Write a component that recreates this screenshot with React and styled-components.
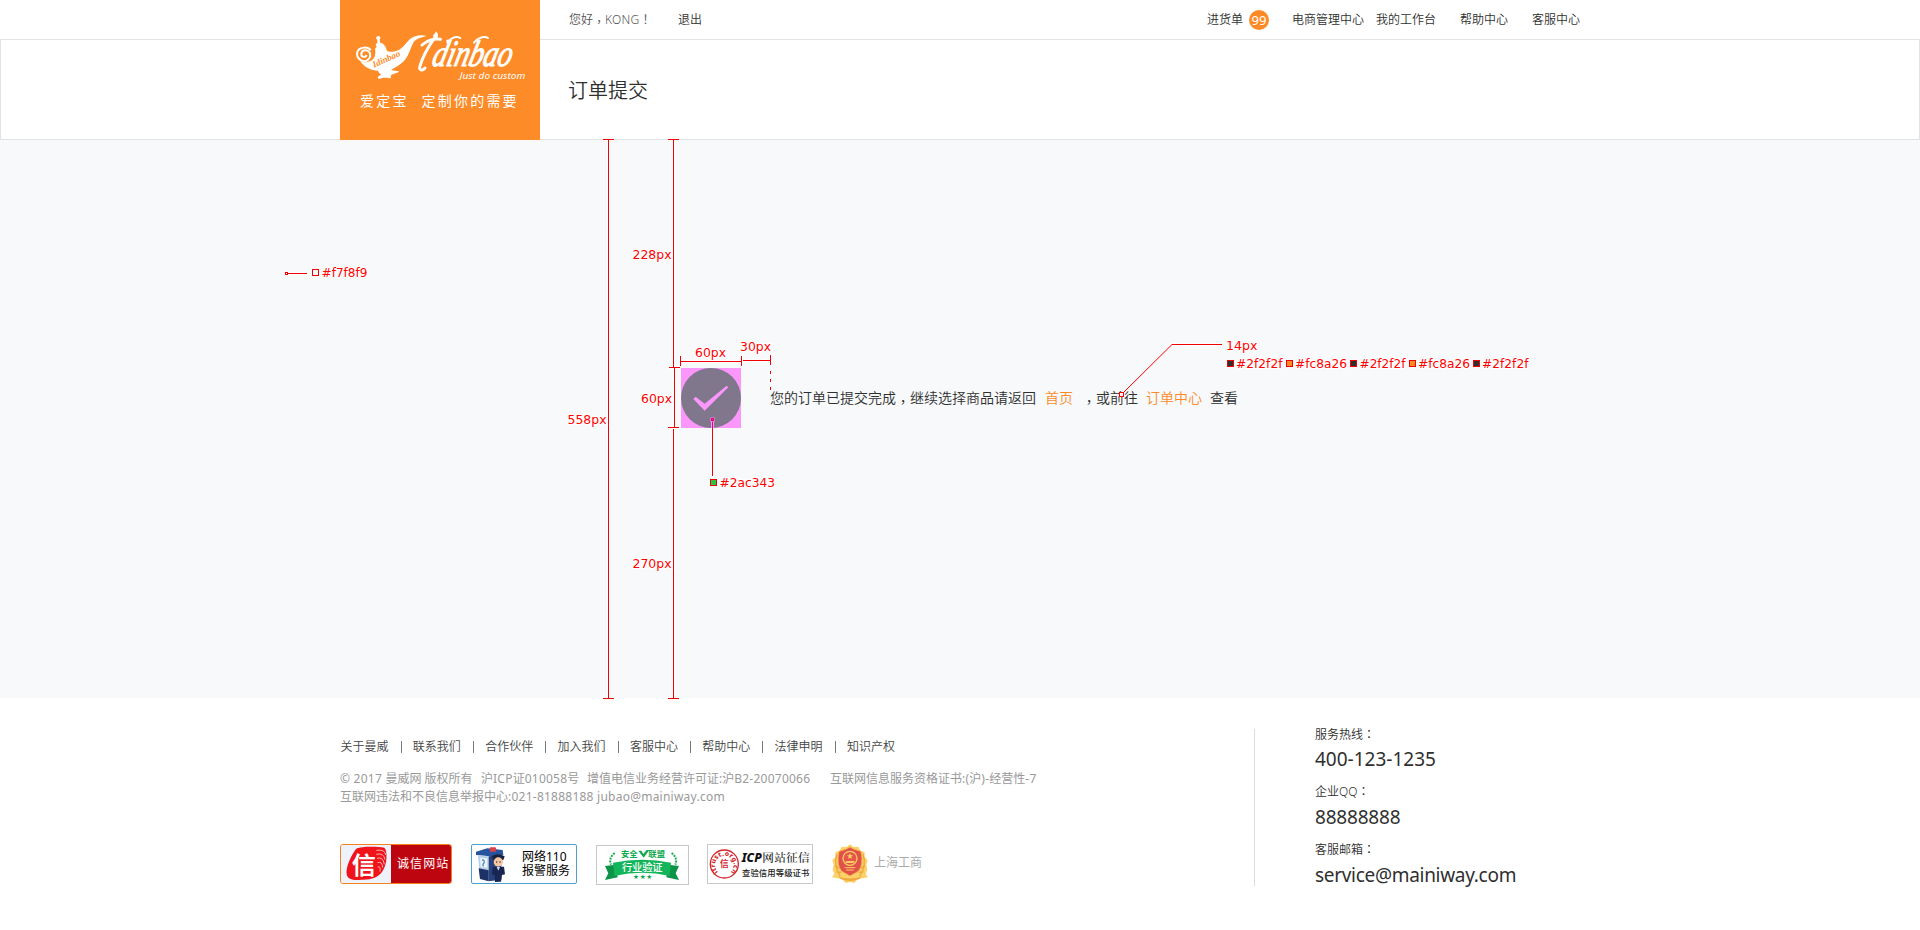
import React from "react";
import styled, { createGlobalStyle } from "styled-components";

const GlobalStyle = createGlobalStyle`
  * { box-sizing: border-box; }
  body {
    margin: 0;
    background: #fff;
    color: #2f2f2f;
    font-family: "Noto Sans", "Noto Sans CJK SC", sans-serif;
    font-size: 12px;
    line-height: 18px;
  }
`;

const Page = styled.div`
  position: relative;
  width: 1920px;
  height: 930px;
  overflow: hidden;
`;

/* Full-width punctuation, centred in its em box; commas sit near the baseline */
const Punct = styled.span`
  font-family: "Noto Sans CJK TC", sans-serif;
  line-height: 0;
  vertical-align: ${(p) => (p.$low ? "-0.25em" : "baseline")};
`;

/* ---------- header ---------- */

const Header = styled.header`
  display: grid;
  grid-template-columns: 340px 200px 1fr;
  grid-template-rows: 39px 101px;
`;

const TopBar = styled.div`
  grid-column: 3;
  grid-row: 1;
  display: flex;
  align-items: center;
  padding: 1px 340px 0 29px;
  font-weight: 350;
`;

const TopText = styled.span`
  color: ${(p) => p.$color || "#2f2f2f"};
  margin-left: ${(p) => p.$gap || 0}px;
  width: ${(p) => p.$w}px;
  white-space: nowrap;
`;

const TopRight = styled.nav`
  display: flex;
  align-items: center;
  margin-left: auto;
`;

const Count = styled.span`
  width: 20px;
  height: 20px;
  margin-left: 6px;
  border-radius: 50%;
  background: #fc8a26;
  color: #fff;
  font-size: 13px;
  font-weight: 400;
  text-align: center;
  line-height: 20px;
`;

const TitleBar = styled.div`
  grid-column: 1 / -1;
  grid-row: 2;
  border: 1px solid #e1e3e4;
  padding: 36px 0 0 567px;
`;

const Title = styled.h1`
  margin: 0;
  font-size: 20px;
  font-weight: 350;
  line-height: 30px;
`;

const Logo = styled.a`
  grid-column: 2;
  grid-row: 1 / 3;
  z-index: 1;
  display: flex;
  flex-direction: column;
  background: #fd8b27;
`;

const Slogan = styled.span`
  display: flex;
  gap: 13px;
  padding-left: 20px;
  color: #fff;
  font-size: 14px;
  line-height: 20px;
  letter-spacing: 2.2px;
  white-space: nowrap;
`;

/* ---------- main ---------- */

const Main = styled.main`
  height: 558px;
  background: #f7f9fb;
  padding: 228px 0 0 681px;
`;

const Result = styled.div`
  display: flex;
  align-items: center;
  gap: 29px;
  height: 60px;
`;

const Message = styled.p`
  display: flex;
  margin: 0;
  padding-bottom: 1px;
  font-size: 14px;
  font-weight: 350;
  line-height: 20px;
  white-space: pre;
`;

const Link = styled.a`
  color: #fc8a26;
  margin: 0 ${(p) => p.$right}px 0 ${(p) => p.$left}px;
`;

/* ---------- footer ---------- */

const Footer = styled.footer`
  display: flex;
  padding: 31px 0 0 340px;
`;

const FooterInfo = styled.div`
  width: 914px;
  padding-top: 9px;
`;

const FooterLinks = styled.nav`
  display: flex;
  align-items: center;
  padding-left: 0.5px;
  color: #444;
  font-weight: 350;
`;

const FooterLink = styled.a`
  width: 49px;
  white-space: nowrap;
`;

const Divider = styled.i`
  width: 1px;
  height: 12px;
  margin: 0 11.25px 0 11.1px;
  background: #777;
`;

const Copyright = styled.div`
  margin-top: 14px;
  color: #999;
  white-space: nowrap;
`;

const Line = styled.div`
  display: flex;
  height: 18px;
`;

const Part = styled.span`
  width: ${(p) => p.$w}px;
`;

const Latin = styled.span`
  letter-spacing: 0.24px;
`;

const Badges = styled.div`
  display: flex;
  align-items: center;
  margin-top: 37px;
`;

const Badge = styled.div`
  display: flex;
  align-items: center;
  width: ${(p) => p.$w}px;
  height: 40px;
  margin: ${(p) => p.$drop || 0}px ${(p) => p.$gap}px 0 0;
  border: 1px solid ${(p) => p.$line};
  border-radius: ${(p) => p.$radius || 0}px;
  overflow: hidden;
  background: #fff;
`;

const RedLabel = styled.span`
  flex: 1;
  align-self: stretch;
  background: #bd0510;
  color: #fff;
  letter-spacing: 1.1px;
  line-height: 38px;
  padding-left: 6px;
  white-space: nowrap;
`;

const PoliceLabel = styled.span`
  margin-left: 14px;
  color: #000;
  line-height: 14px;
  white-space: nowrap;
`;

const Bureau = styled.span`
  margin: 0 0 3px 5px;
  color: #aaa;
`;

const Contact = styled.dl`
  height: 157px;
  margin: 0;
  border-left: 1px solid #ddd;
  padding-left: 60px;
`;

const ContactLabel = styled.dt`
  height: ${(p) => p.$h}px;
  font-weight: 350;
  line-height: 12px;
`;

const ContactValue = styled.dd`
  margin: 0 0 ${(p) => p.$after || 0}px;
  height: 28px;
  font-size: 19px;
  line-height: 28px;
  letter-spacing: ${(p) => p.$spacing}px;
`;

/* ---------- measurement marks ---------- */

const Marks = styled.svg`
  position: absolute;
  left: 0;
  top: 0;
  pointer-events: none;

  text {
    font-family: "DejaVu Sans", sans-serif;
    font-size: 12.2px;
    fill: #f00;
    stroke: #fff;
    stroke-width: 2px;
    paint-order: stroke;
  }
`;

const LAMP = {
  body: "M88 178C98 192 110 186 124 182C134 176 136 166 136 154C134 146 136 142 141 140C134 136 138 131 142 129L142 119C136 116 138 109 145 108C152 109 153 116 149 119L150 128C158 128 160 132 164 137C168 141 169 147 171 153C178 157 196 155 208 149C222 140 229 127 240 117C252 107 272 103 290 108C272 113 259 116 251 126C238 151 236 171 218 187C206 197 196 203 184 209C190 213 201 211 207 214C205 220 190 220 182 227C184 231 183 235 178 235C166 232 156 234 147 237C140 233 145 228 152 226C155 221 145 220 145 213C122 211 99 202 88 178Z",
  curl: "M110 165C106 174 94 172 94 162C94 150 112 146 119 158C126 174 108 190 94 181C76 172 76 146 100 143C110 142 119 146 122 151",
};

function LogoArt() {
  return (
    <svg width="200" height="91" viewBox="30 0 600 273" overflow="visible">
      <path d={LAMP.body} fill="#fff" />
      <path d={LAMP.curl} fill="none" stroke="#fff" strokeWidth="6" />
      <text x="132" y="203" transform="rotate(-24 132 203)" textLength="88" lengthAdjust="spacingAndGlyphs"
        fontFamily="Liberation Serif, serif" fontStyle="italic" fontWeight="700" fontSize="27" fill="#fd8b27">Idinbao</text>
      <path d="M317 94C327 101 325 108 321 116C314 115 307 111 310 105C313 102 317 99 317 94Z" fill="#fff" />
      <path d="M276 135C293 119 318 115 331 118M312 116C293 143 276 178 270 198C266 210 276 215 285 204" fill="none" stroke="#fff" strokeWidth="9" strokeLinecap="round" />
      <text transform="translate(302 198) skewX(-14)" textLength="238" lengthAdjust="spacingAndGlyphs"
        fontFamily="Liberation Serif, serif" fontStyle="italic" fontSize="112" fill="#fff" stroke="#fff" strokeWidth="3">dinbao</text>
      <path d="M352 128C362 114 378 106 391 114M432 128C442 114 462 106 474 114" fill="none" stroke="#fff" strokeWidth="6" strokeLinecap="round" />
      <text x="389" y="237" textLength="197" lengthAdjust="spacingAndGlyphs" fontFamily="Noto Sans, sans-serif"
        fontStyle="italic" fontSize="28" fontWeight="400" fill="#fff">Just do custom</text>
    </svg>
  );
}

function CheckIcon() {
  return (
    <svg width="60" height="60" viewBox="0 0 180 180">
      <rect width="180" height="180" fill="#fb96fb" />
      <circle cx="90" cy="90" r="90" fill="#80778d" />
      <path d="M37 93L44 86L71 107L137 53L142 58L71 128Z" fill="#fb96fb" />
    </svg>
  );
}

function TrustSeal() {
  return (
    <svg width="50" height="38" viewBox="0 0 150 114">
      <rect width="150" height="114" fill="#eef2fb" />
      <path d="M45 12C60 3 110 5 130 8C140 16 139 58 125 78C112 98 90 105 62 104C40 107 20 105 17 88C14 66 30 32 45 12Z" fill="#f0141a" />
      <path d="M106 16Q132 12 134 30M106 28Q128 22 132 44M108 40Q126 34 130 58M110 53Q124 48 125 68M110 66Q120 62 117 80" fill="none" stroke="#f7b5b8" strokeWidth="3" />
      <text x="32" y="86" fontFamily="Noto Sans CJK SC, sans-serif" fontWeight="700" fontSize="72" fill="#fff">信</text>
    </svg>
  );
}

function PoliceBooth() {
  return (
    <svg width="36" height="38" viewBox="0 0 108 114">
      <path d="M12 20L46 10L92 15L94 30L54 34L12 30Z" fill="#27549c" />
      <path d="M18 31L50 34L50 106L24 100Z" fill="#b8cfe5" />
      <path d="M20 70L50 76L50 109L24 102Z" fill="#1d3164" />
      <path d="M50 34L88 30L88 104L50 109Z" fill="#27427c" />
      <path d="M24 38L46 40L46 68L26 66Z" fill="#e9f3fb" />
      <path d="M30 45Q39 44 36 54Q30 59 35 64" fill="none" stroke="#5c88b9" strokeWidth="4" />
      <rect x="53" y="7" width="19" height="13" rx="3" fill="#d8434b" />
      <path d="M60 33Q76 22 98 34L94 45L63 44Z" fill="#18213f" />
      <circle cx="79" cy="51" r="14" fill="#f4c7a2" />
      <path d="M62 66L96 65L99 88L90 90L87 110L69 111L68 91L60 88Z" fill="#182653" />
      <path d="M74 66L79 77L84 66Z" fill="#cfdcf0" />
      <circle cx="74" cy="51" r="2" fill="#222" />
      <circle cx="84" cy="51" r="2" fill="#222" />
    </svg>
  );
}

function IndustrySeal() {
  const cjk = "Noto Sans CJK SC, sans-serif";
  return (
    <svg width="91" height="38" viewBox="0 0 273 114">
      <g fill="none" stroke="#19ad55" strokeWidth="6" strokeDasharray="6 3">
        <path d="M53 21Q34 36 42 56" />
        <path d="M224 21Q243 36 235 56" />
      </g>
      <path d="M24 60L56 56L62 94L24 102L34 82ZM246 60L214 56L208 94L246 102L236 82Z" fill="#0b9347" />
      <path d="M48 50Q136 32 222 50L218 90Q136 70 52 90Z" fill="#12b559" />
      <g fontFamily={cjk} fontWeight="700" fill="#10a950">
        <text x="72" y="34" fontSize="25">安全</text>
        <text x="154" y="34" fontSize="25">联盟</text>
        <text x="75" y="76" fontSize="31" fontWeight="500" fill="#fff" textLength="122">行业验证</text>
      </g>
      <path d="M124 14L133 14L139 24L149 12L157 12L140 35Z" fill="#10a950" />
      <g fill="#10a950" fontSize="20" fontFamily="DejaVu Sans, sans-serif">
        <text x="108" y="99">★</text>
        <text x="128" y="98">★</text>
        <text x="148" y="99">★</text>
      </g>
    </svg>
  );
}

function IcpSeal() {
  return (
    <svg width="104" height="38" viewBox="0 0 312 114">
      <circle cx="49" cy="57" r="42" fill="none" stroke="#d3262c" strokeWidth="4" />
      <defs>
        <path id="sealRing" d="M30 81A28 28 0 1 1 68 81" />
      </defs>
      <text fontFamily="Noto Sans, sans-serif" fontWeight="800" fontSize="20" fill="#d3262c">
        <textPath href="#sealRing" textLength="134">itrust.org.cn</textPath>
      </text>
      <text x="36" y="67" fontFamily="Noto Sans CJK SC, sans-serif" fontWeight="700" fontSize="26" fill="#d3262c">信</text>
      <text x="101" y="52" fontFamily="Noto Sans, sans-serif" fontStyle="italic" fontWeight="800" fontSize="36"
        textLength="60" lengthAdjust="spacingAndGlyphs" fill="#111">ICP</text>
      <text x="163" y="51" fontFamily="Noto Serif CJK SC, Noto Sans CJK SC, sans-serif" fontWeight="500" fontSize="35"
        textLength="142" fill="#222">网站征信</text>
      <text x="102" y="93" fontFamily="Noto Sans CJK SC, sans-serif" fontWeight="500" fontSize="25"
        textLength="202" fill="#222">查验信用等级证书</text>
    </svg>
  );
}

function Emblem() {
  return (
    <svg width="38" height="40" viewBox="0 0 114 120">
      <path d="M57 1L67 9L82 8L88 20L101 25L101 39L110 49L106 62L109 78L104 90L111 100L94 103L80 106L70 117L57 114L44 117L34 106L20 103L3 100L10 90L5 78L8 62L4 49L13 39L13 25L26 20L32 8L47 9Z" fill="#fad269" />
      <path d="M18 30Q6 66 28 96M96 30Q108 66 86 96M12 64L24 73M102 64L90 73M17 84L31 85M97 84L83 85" fill="none" stroke="#efa83e" strokeWidth="4" />
      <path d="M57 9L70 16L90 22Q99 63 82 82L57 96L32 82Q15 63 24 22L44 16Z" fill="#e2504a" stroke="#f5b44a" strokeWidth="3" />
      <circle cx="57" cy="43" r="21" fill="#e8554a" stroke="#f9cf63" strokeWidth="4" />
      <path d="M57 28L60 34L66 34L61 38L63 44L57 41L51 44L53 38L48 34L54 34ZM43 51L71 51L68 57L46 57Z" fill="#f9cf63" />
      <path d="M41 71L73 71M46 78L68 78" stroke="#f9cf63" strokeWidth="3" />
      <path d="M21 97Q57 110 93 97L83 106Q57 116 31 106Z" fill="#efa83e" />
    </svg>
  );
}

const RULES = [
  "M608.5 139V698M603 139.5H614M603 698.5H614",
  "M673.5 139V367M668 139.5H679M669 367.5H680",
  "M674.5 368V427M668 427.5H679",
  "M673.5 429V698M668 698.5H679",
  "M680.5 356V366M741.5 356V366M681 361.5H741",
  "M743 360.5H770M770.5 355V365M770.5 371V374M770.5 379V382M770.5 387V390",
  "M712.5 421V476",
  "M288 273.5H307",
  "M1172 344.5H1222",
];

const NOTES = [
  { x: 632.5, y: 259, w: 39, t: "228px" },
  { x: 567.5, y: 424, w: 39, t: "558px" },
  { x: 632.5, y: 568, w: 39, t: "270px" },
  { x: 641, y: 403, w: 31, t: "60px" },
  { x: 695, y: 357, w: 31, t: "60px" },
  { x: 740, y: 351, w: 31, t: "30px" },
  { x: 719.5, y: 487, w: 55.5, t: "#2ac343" },
  { x: 321.5, y: 277, w: 46, t: "#f7f8f9" },
  { x: 1226, y: 350, w: 31.5, t: "14px" },
  { x: 1236, y: 368, w: 46.5, t: "#2f2f2f" },
  { x: 1295, y: 368, w: 52, t: "#fc8a26" },
  { x: 1359.5, y: 368, w: 46, t: "#2f2f2f" },
  { x: 1418, y: 368, w: 52, t: "#fc8a26" },
  { x: 1482, y: 368, w: 46.5, t: "#2f2f2f" },
];

const SWATCHES = [
  { x: 312, y: 269, c: "#f7f8f9" },
  { x: 710, y: 479, c: "#2ac343" },
  { x: 1227, y: 360, c: "#2f2f2f" },
  { x: 1286, y: 360, c: "#fc8a26" },
  { x: 1350, y: 360, c: "#2f2f2f" },
  { x: 1409, y: 360, c: "#fc8a26" },
  { x: 1473, y: 360, c: "#2f2f2f" },
];

function Measurements() {
  return (
    <Marks width="1920" height="930" viewBox="0 0 1920 930">
      <path d={RULES.join("")} stroke="#fff" strokeWidth="3" fill="none" opacity="0.8" />
      <path d={RULES.join("")} stroke="#f00000" strokeWidth="1" fill="none" />
      <path d="M1123 393L1172 344.5" stroke="#f00" strokeWidth="1" fill="none" />
      <path d="M712.5 421V428" stroke="#fb96fb" strokeWidth="3" />
      <path d="M712.5 421V428" stroke="#e5007a" strokeWidth="1" />
      <rect x="710.5" y="417.5" width="4" height="4" fill="#fb96fb" />
      <rect x="711.5" y="418.5" width="2" height="2" fill="#c04a8a" stroke="#e5007a" />
      <rect x="285.5" y="272.5" width="2" height="2" fill="#fff" stroke="#f00000" />
      <rect x="1119.5" y="392.5" width="4" height="4" fill="#fff" stroke="#f00" />
      {SWATCHES.map((s) => (
        <rect key={s.x} x={s.x + 0.5} y={s.y + 0.5} width="6" height="6" fill={s.c} stroke="#f00000" />
      ))}
      {NOTES.map((n) => (
        <text key={`${n.x}-${n.y}`} x={n.x} y={n.y} textLength={n.w} lengthAdjust="spacingAndGlyphs">
          {n.t}
        </text>
      ))}
    </Marks>
  );
}

const FOOTER_LINKS = ["关于曼威", "联系我们", "合作伙伴", "加入我们", "客服中心", "帮助中心", "法律申明", "知识产权"];

export default function App() {
  return (
    <Page>
      <GlobalStyle />
      <Header>
        <TopBar>
          <TopText $w={80} $color="#555">
            您好<Punct $low>，</Punct><Latin>KONG</Latin><Punct>！</Punct>
          </TopText>
          <TopText $w={24} $gap={29}>退出</TopText>
          <TopRight>
            <TopText $w={36}>进货单</TopText>
            <Count>99</Count>
            <TopText $w={72} $gap={23}>电商管理中心</TopText>
            <TopText $w={60} $gap={12}>我的工作台</TopText>
            <TopText $w={48} $gap={24}>帮助中心</TopText>
            <TopText $w={48} $gap={24}>客服中心</TopText>
          </TopRight>
        </TopBar>
        <TitleBar>
          <Title>订单提交</Title>
        </TitleBar>
        <Logo>
          <LogoArt />
          <Slogan>
            <span>爱定宝</span>
            <span>定制你的需要</span>
          </Slogan>
        </Logo>
      </Header>

      <Main>
        <Result>
          <CheckIcon />
          <Message>
            <span>您的订单已提交完成<Punct $low>，</Punct>继续选择商品请返回</span>
            <Link $left={9} $right={9}>首页</Link>
            <span><Punct $low>，</Punct>或前往</span>
            <Link $left={8} $right={8}>订单中心</Link>
            <span>查看</span>
          </Message>
        </Result>
      </Main>

      <Footer>
        <FooterInfo>
          <FooterLinks>
            {FOOTER_LINKS.map((label, i) => (
              <React.Fragment key={label}>
                {i > 0 && <Divider />}
                <FooterLink>{label}</FooterLink>
              </React.Fragment>
            ))}
          </FooterLinks>
          <Copyright>
            <Line>
              <Part $w={141}><Latin>© 2017 </Latin>曼威网 <Latin> </Latin>版权所有</Part>
              <Part $w={106}>沪<Latin>ICP</Latin>证<Latin>010058</Latin>号</Part>
              <Part $w={243}>增值电信业务经营许可证:沪<Latin>B2-20070066</Latin></Part>
              <Part $w={210}>互联网信息服务资格证书<Latin>:(</Latin>沪<Latin>)-</Latin>经营性<Latin>-7</Latin></Part>
            </Line>
            <Line>
              <span>互联网违法和不良信息举报中心<Latin>:021-81888188 jubao@mainiway.com</Latin></span>
            </Line>
          </Copyright>
          <Badges>
            <Badge $w={112} $gap={19} $line="#f5821f" $radius={3}>
              <TrustSeal />
              <RedLabel>诚信网站</RedLabel>
            </Badge>
            <Badge $w={106} $gap={19} $line="#4d9fd6" $radius={2}>
              <PoliceBooth />
              <PoliceLabel>
                网络110
                <br />
                报警服务
              </PoliceLabel>
            </Badge>
            <Badge $w={93} $gap={18} $drop={2} $line="#c8c8c8">
              <IndustrySeal />
            </Badge>
            <Badge $w={106} $gap={18} $line="#c8c8c8">
              <IcpSeal />
            </Badge>
            <Emblem />
            <Bureau>上海工商</Bureau>
          </Badges>
        </FooterInfo>
        <Contact>
          <ContactLabel $h={16}>服务热线<Punct>：</Punct></ContactLabel>
          <ContactValue $spacing={0} $after={13}>400-123-1235</ContactValue>
          <ContactLabel $h={17}>企业QQ<Punct>：</Punct></ContactLabel>
          <ContactValue $spacing={-0.2} $after={13}>88888888</ContactValue>
          <ContactLabel $h={17}>客服邮箱<Punct>：</Punct></ContactLabel>
          <ContactValue $spacing={-0.3}>service@mainiway.com</ContactValue>
        </Contact>
      </Footer>
      <Measurements />
    </Page>
  );
}
